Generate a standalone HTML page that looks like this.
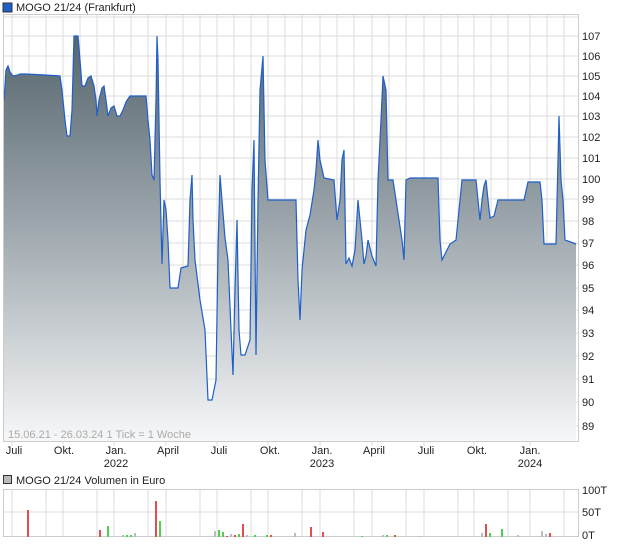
<!DOCTYPE html><html><head><style>
body{margin:0;background:#fff;font-family:"Liberation Sans",sans-serif;}
svg text{font-family:"Liberation Sans",sans-serif;}
</style></head><body>
<svg width="620" height="546" xmlns="http://www.w3.org/2000/svg">
<defs><linearGradient id="g" x1="0" y1="36" x2="0" y2="440" gradientUnits="userSpaceOnUse">
<stop offset="0" stop-color="#56656e"/><stop offset="0.45" stop-color="#9aa4aa"/><stop offset="1" stop-color="#f6f7f8"/></linearGradient></defs>
<rect x="0" y="0" width="620" height="546" fill="#fff"/>
<rect x="3" y="3" width="9" height="9" fill="#1f5fc8" stroke="#333" stroke-width="1"/>
<text x="16" y="11" font-size="11" fill="#222">MOGO 21/24 (Frankfurt)</text>
<g stroke="#dcdcdc" stroke-width="1">
<line x1="4" y1="17" x2="578" y2="17"/><line x1="4" y1="36" x2="578" y2="36"/><line x1="4" y1="56" x2="578" y2="56"/><line x1="4" y1="76" x2="578" y2="76"/><line x1="4" y1="96" x2="578" y2="96"/><line x1="4" y1="116" x2="578" y2="116"/><line x1="4" y1="137" x2="578" y2="137"/><line x1="4" y1="158" x2="578" y2="158"/><line x1="4" y1="179" x2="578" y2="179"/><line x1="4" y1="199" x2="578" y2="199"/><line x1="4" y1="221" x2="578" y2="221"/><line x1="4" y1="243" x2="578" y2="243"/><line x1="4" y1="265" x2="578" y2="265"/><line x1="4" y1="288" x2="578" y2="288"/><line x1="4" y1="310" x2="578" y2="310"/><line x1="4" y1="333" x2="578" y2="333"/><line x1="4" y1="356" x2="578" y2="356"/><line x1="4" y1="379" x2="578" y2="379"/><line x1="4" y1="402" x2="578" y2="402"/><line x1="4" y1="426" x2="578" y2="426"/>
<line x1="12" y1="14" x2="12" y2="446"/><line x1="29" y1="14" x2="29" y2="441"/><line x1="46" y1="14" x2="46" y2="441"/><line x1="63" y1="14" x2="63" y2="446"/><line x1="80" y1="14" x2="80" y2="441"/><line x1="97" y1="14" x2="97" y2="441"/><line x1="114" y1="14" x2="114" y2="446"/><line x1="131" y1="14" x2="131" y2="441"/><line x1="148" y1="14" x2="148" y2="441"/><line x1="166" y1="14" x2="166" y2="446"/><line x1="183" y1="14" x2="183" y2="441"/><line x1="200" y1="14" x2="200" y2="441"/><line x1="217" y1="14" x2="217" y2="446"/><line x1="234" y1="14" x2="234" y2="441"/><line x1="251" y1="14" x2="251" y2="441"/><line x1="268" y1="14" x2="268" y2="446"/><line x1="285" y1="14" x2="285" y2="441"/><line x1="302" y1="14" x2="302" y2="441"/><line x1="320" y1="14" x2="320" y2="446"/><line x1="337" y1="14" x2="337" y2="441"/><line x1="354" y1="14" x2="354" y2="441"/><line x1="372" y1="14" x2="372" y2="446"/><line x1="389" y1="14" x2="389" y2="441"/><line x1="406" y1="14" x2="406" y2="441"/><line x1="424" y1="14" x2="424" y2="446"/><line x1="441" y1="14" x2="441" y2="441"/><line x1="458" y1="14" x2="458" y2="441"/><line x1="474" y1="14" x2="474" y2="446"/><line x1="491" y1="14" x2="491" y2="441"/><line x1="508" y1="14" x2="508" y2="441"/><line x1="530" y1="14" x2="530" y2="446"/><line x1="547" y1="14" x2="547" y2="441"/><line x1="564" y1="14" x2="564" y2="441"/>
</g>
<path fill="url(#g)" stroke="none" d="M4,441 L4,100 6,70 8,66 10,72 13,76 18,75 20,74 26,74 45,75 60,76 62,90 65,120 67,136 70,136 72,110 74,36 78,36 80,60 82,86 85,86 88,78 91,76 94,86 96,100 97,116 99,100 102,88 104,86 106,100 108,116 111,108 114,106 117,116 120,116 123,110 126,102 130,96 146,96 148,120 150,140 152,175 154,180 156,100 157,36 158,60 160,180 162,264 164,200 166,210 168,240 170,288 178,288 181,268 188,266 190,200 192,175 193,220 195,260 200,300 205,330 208,400 212,400 216,380 218,250 220,175 222,200 225,238 228,260 231,330 233,375 235,290 237,220 239,330 241,355 245,355 250,340 252,190 254,140 256,355 258,200 260,90 263,56 265,160 268,200 296,200 298,280 300,320 302,270 304,250 306,230 310,215 314,190 316,170 318,140 320,160 324,178 334,180 337,220 340,200 342,160 344,150 346,264 349,258 352,266 355,250 358,200 362,240 364,264 366,256 368,240 372,256 376,266 378,180 381,120 383,76 386,90 388,180 393,180 396,200 402,240 404,260 406,180 410,178 438,178 440,240 442,260 444,256 447,250 450,244 456,240 460,200 462,180 476,180 478,200 480,220 482,200 484,186 486,180 488,200 490,218 494,216 498,200 524,200 528,182 540,182 542,200 544,244 556,244 558,160 559,116 561,180 563,200 565,240 576,244 576,441 Z"/>
<path fill="none" stroke="#1f5fc8" stroke-width="1.2" d="M4,100 6,70 8,66 10,72 13,76 18,75 20,74 26,74 45,75 60,76 62,90 65,120 67,136 70,136 72,110 74,36 78,36 80,60 82,86 85,86 88,78 91,76 94,86 96,100 97,116 99,100 102,88 104,86 106,100 108,116 111,108 114,106 117,116 120,116 123,110 126,102 130,96 146,96 148,120 150,140 152,175 154,180 156,100 157,36 158,60 160,180 162,264 164,200 166,210 168,240 170,288 178,288 181,268 188,266 190,200 192,175 193,220 195,260 200,300 205,330 208,400 212,400 216,380 218,250 220,175 222,200 225,238 228,260 231,330 233,375 235,290 237,220 239,330 241,355 245,355 250,340 252,190 254,140 256,355 258,200 260,90 263,56 265,160 268,200 296,200 298,280 300,320 302,270 304,250 306,230 310,215 314,190 316,170 318,140 320,160 324,178 334,180 337,220 340,200 342,160 344,150 346,264 349,258 352,266 355,250 358,200 362,240 364,264 366,256 368,240 372,256 376,266 378,180 381,120 383,76 386,90 388,180 393,180 396,200 402,240 404,260 406,180 410,178 438,178 440,240 442,260 444,256 447,250 450,244 456,240 460,200 462,180 476,180 478,200 480,220 482,200 484,186 486,180 488,200 490,218 494,216 498,200 524,200 528,182 540,182 542,200 544,244 556,244 558,160 559,116 561,180 563,200 565,240 576,244"/>
<rect x="3.5" y="14.5" width="575" height="427" fill="none" stroke="#ccc"/>
<text x="8" y="438" font-size="11" fill="#aaa">15.06.21 - 26.03.24   1 Tick = 1 Woche</text>
<g font-size="11" fill="#222">
<text x="582" y="40">107</text><text x="582" y="60">106</text><text x="582" y="80">105</text><text x="582" y="100">104</text><text x="582" y="120">103</text><text x="582" y="141">102</text><text x="582" y="162">101</text><text x="582" y="183">100</text><text x="582" y="203">99</text><text x="582" y="225">98</text><text x="582" y="247">97</text><text x="582" y="269">96</text><text x="582" y="292">95</text><text x="582" y="314">94</text><text x="582" y="337">93</text><text x="582" y="360">92</text><text x="582" y="383">91</text><text x="582" y="406">90</text><text x="582" y="430">89</text>
</g>
<g font-size="11" fill="#222" text-anchor="middle">
<text x="14" y="454">Juli</text><text x="64" y="454">Okt.</text><text x="116" y="454">Jan.</text><text x="168" y="454">April</text><text x="219" y="454">Juli</text><text x="270" y="454">Okt.</text><text x="322" y="454">Jan.</text><text x="374" y="454">April</text><text x="426" y="454">Juli</text><text x="477" y="454">Okt.</text><text x="530" y="454">Jan.</text>
<text x="116" y="467">2022</text><text x="322" y="467">2023</text><text x="530" y="467">2024</text>
</g>
<rect x="3.5" y="475.5" width="8" height="8" fill="#bbb" stroke="#333"/>
<text x="16" y="484" font-size="11" fill="#222">MOGO 21/24 Volumen in Euro</text>
<g stroke="#dcdcdc">
<line x1="4" y1="512" x2="578" y2="512"/>
<line x1="12" y1="489" x2="12" y2="537"/><line x1="46" y1="489" x2="46" y2="537"/><line x1="63" y1="489" x2="63" y2="537"/><line x1="97" y1="489" x2="97" y2="537"/><line x1="114" y1="489" x2="114" y2="537"/><line x1="148" y1="489" x2="148" y2="537"/><line x1="166" y1="489" x2="166" y2="537"/><line x1="200" y1="489" x2="200" y2="537"/><line x1="217" y1="489" x2="217" y2="537"/><line x1="251" y1="489" x2="251" y2="537"/><line x1="268" y1="489" x2="268" y2="537"/><line x1="302" y1="489" x2="302" y2="537"/><line x1="320" y1="489" x2="320" y2="537"/><line x1="354" y1="489" x2="354" y2="537"/><line x1="372" y1="489" x2="372" y2="537"/><line x1="406" y1="489" x2="406" y2="537"/><line x1="424" y1="489" x2="424" y2="537"/><line x1="458" y1="489" x2="458" y2="537"/><line x1="474" y1="489" x2="474" y2="537"/><line x1="508" y1="489" x2="508" y2="537"/><line x1="530" y1="489" x2="530" y2="537"/><line x1="564" y1="489" x2="564" y2="537"/>
</g>
<rect x="3.5" y="489.5" width="575" height="47" fill="none" stroke="#ccc"/>
<g>
<rect x="27" y="510" width="2" height="27" fill="#e05050"/>
<rect x="99" y="530" width="2" height="7" fill="#e05050"/>
<rect x="107" y="526" width="2" height="11" fill="#50d050"/>
<rect x="122" y="535" width="2" height="2" fill="#bbb"/><rect x="126" y="535" width="2" height="2" fill="#50d050"/><rect x="130" y="535" width="2" height="2" fill="#50d050"/><rect x="134" y="533" width="2" height="4" fill="#bbb"/>
<rect x="155" y="501" width="2" height="36" fill="#e05050"/>
<rect x="159" y="521" width="2" height="16" fill="#50d050"/>
<rect x="214" y="531" width="2" height="6" fill="#bbb"/><rect x="218" y="530" width="2" height="7" fill="#50d050"/><rect x="222" y="532" width="2" height="5" fill="#50d050"/><rect x="226" y="536" width="2" height="1" fill="#e05050"/><rect x="230" y="534" width="2" height="3" fill="#bbb"/><rect x="234" y="535" width="2" height="2" fill="#e05050"/><rect x="238" y="534" width="2" height="3" fill="#50d050"/><rect x="242" y="524" width="2" height="13" fill="#e05050"/><rect x="246" y="535" width="2" height="2" fill="#bbb"/><rect x="254" y="535" width="2" height="2" fill="#50d050"/><rect x="266" y="535" width="2" height="2" fill="#50d050"/><rect x="270" y="535" width="2" height="2" fill="#e05050"/>
<rect x="294" y="533" width="2" height="4" fill="#bbb"/><rect x="310" y="527" width="2" height="10" fill="#e05050"/><rect x="322" y="532" width="2" height="5" fill="#e05050"/>
<rect x="361" y="536" width="2" height="1" fill="#50d050"/><rect x="382" y="535" width="2" height="2" fill="#bbb"/><rect x="386" y="535" width="2" height="2" fill="#50d050"/><rect x="394" y="535" width="2" height="2" fill="#e05050"/><rect x="418" y="536" width="2" height="1" fill="#bbb"/>
<rect x="481" y="533" width="2" height="4" fill="#bbb"/><rect x="485" y="524" width="2" height="13" fill="#e05050"/><rect x="489" y="533" width="2" height="4" fill="#50d050"/><rect x="501" y="529" width="2" height="8" fill="#50d050"/><rect x="517" y="535" width="2" height="2" fill="#bbb"/><rect x="541" y="531" width="2" height="6" fill="#bbb"/><rect x="545" y="534" width="2" height="3" fill="#bbb"/><rect x="549" y="533" width="2" height="4" fill="#e05050"/>
</g>
<g font-size="11" fill="#222"><text x="582" y="494">100T</text><text x="582" y="516">50T</text><text x="582" y="539">0T</text></g>
</svg>
</body></html>
